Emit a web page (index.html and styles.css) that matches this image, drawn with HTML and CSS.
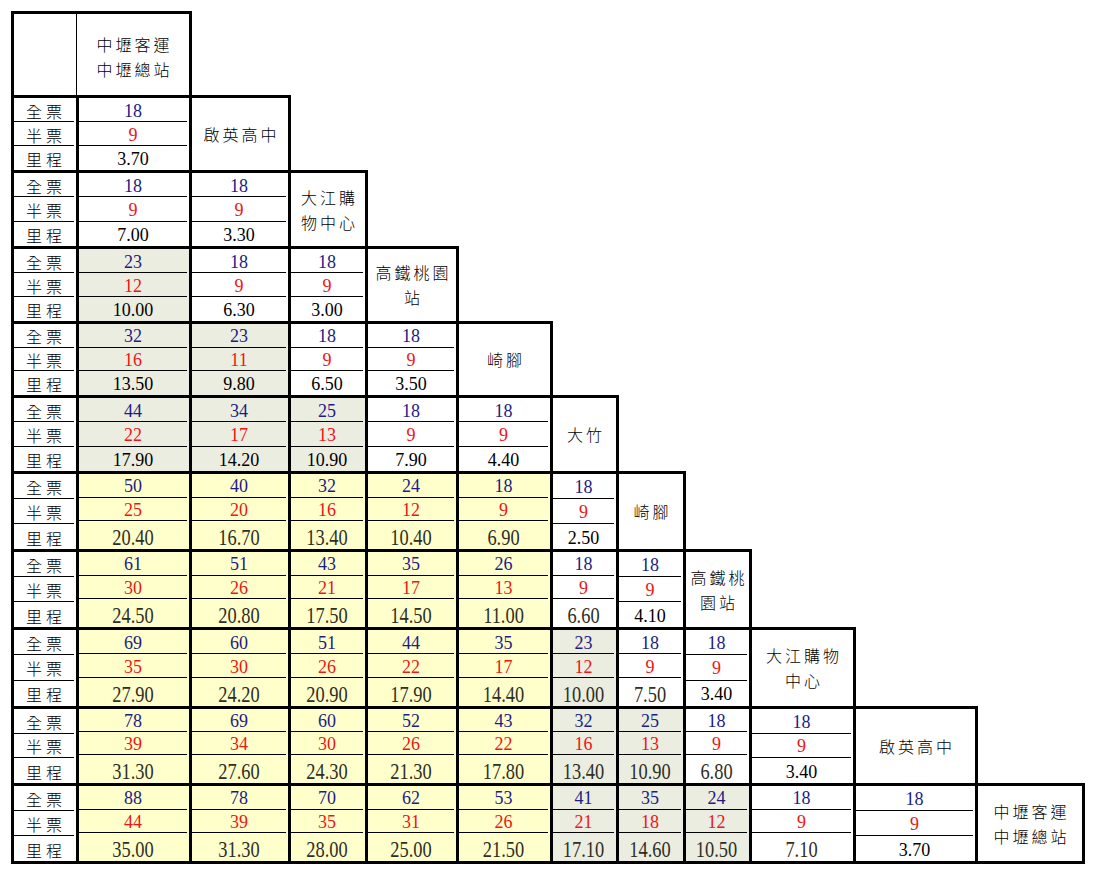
FILE: index.html
```html
<!DOCTYPE html>
<html lang="zh-Hant">
<head>
<meta charset="utf-8">
<title>票價表</title>
<link rel="stylesheet" href="styles.css">
</head>
<body>
<div class="fare">
  <!-- header -->
  <div class="corner"></div>
  <div class="st hd"><p>中壢客運<br>中壢總站</p></div>

  <!-- row 1 -->
  <div class="lab"><span>全票</span><span>半票</span><span>里程</span></div>
  <div class="c"><span class="f">18</span><span class="h">9</span><span class="d">3.70</span></div>
  <div class="st"><p>啟英高中</p></div>

  <!-- row 2 -->
  <div class="lab"><span>全票</span><span>半票</span><span>里程</span></div>
  <div class="c"><span class="f">18</span><span class="h">9</span><span class="d">7.00</span></div>
  <div class="c"><span class="f">18</span><span class="h">9</span><span class="d">3.30</span></div>
  <div class="st"><p>大江購<br>物中心</p></div>

  <!-- row 3 -->
  <div class="lab"><span>全票</span><span>半票</span><span>里程</span></div>
  <div class="c g"><span class="f">23</span><span class="h">12</span><span class="d">10.00</span></div>
  <div class="c"><span class="f">18</span><span class="h">9</span><span class="d">6.30</span></div>
  <div class="c"><span class="f">18</span><span class="h">9</span><span class="d">3.00</span></div>
  <div class="st"><p>高鐵桃園<br>站</p></div>

  <!-- row 4 -->
  <div class="lab"><span>全票</span><span>半票</span><span>里程</span></div>
  <div class="c g"><span class="f">32</span><span class="h">16</span><span class="d">13.50</span></div>
  <div class="c g"><span class="f">23</span><span class="h">11</span><span class="d">9.80</span></div>
  <div class="c"><span class="f">18</span><span class="h">9</span><span class="d">6.50</span></div>
  <div class="c"><span class="f">18</span><span class="h">9</span><span class="d">3.50</span></div>
  <div class="st"><p>崎腳</p></div>

  <!-- row 5 -->
  <div class="lab"><span>全票</span><span>半票</span><span>里程</span></div>
  <div class="c g"><span class="f">44</span><span class="h">22</span><span class="d">17.90</span></div>
  <div class="c g"><span class="f">34</span><span class="h">17</span><span class="d">14.20</span></div>
  <div class="c g"><span class="f">25</span><span class="h">13</span><span class="d">10.90</span></div>
  <div class="c"><span class="f">18</span><span class="h">9</span><span class="d">7.90</span></div>
  <div class="c"><span class="f">18</span><span class="h">9</span><span class="d">4.40</span></div>
  <div class="st"><p>大竹</p></div>

  <!-- row 6 -->
  <div class="lab"><span>全票</span><span>半票</span><span>里程</span></div>
  <div class="c y"><span class="f">50</span><span class="h">25</span><span class="d cn">20.40</span></div>
  <div class="c y"><span class="f">40</span><span class="h">20</span><span class="d cn">16.70</span></div>
  <div class="c y"><span class="f">32</span><span class="h">16</span><span class="d cn">13.40</span></div>
  <div class="c y"><span class="f">24</span><span class="h">12</span><span class="d cn">10.40</span></div>
  <div class="c y"><span class="f">18</span><span class="h">9</span><span class="d cn">6.90</span></div>
  <div class="c"><span class="f">18</span><span class="h">9</span><span class="d">2.50</span></div>
  <div class="st"><p>崎腳</p></div>

  <!-- row 7 -->
  <div class="lab"><span>全票</span><span>半票</span><span>里程</span></div>
  <div class="c y"><span class="f">61</span><span class="h">30</span><span class="d cn">24.50</span></div>
  <div class="c y"><span class="f">51</span><span class="h">26</span><span class="d cn">20.80</span></div>
  <div class="c y"><span class="f">43</span><span class="h">21</span><span class="d cn">17.50</span></div>
  <div class="c y"><span class="f">35</span><span class="h">17</span><span class="d cn">14.50</span></div>
  <div class="c y"><span class="f">26</span><span class="h">13</span><span class="d cn">11.00</span></div>
  <div class="c"><span class="f">18</span><span class="h">9</span><span class="d cn">6.60</span></div>
  <div class="c"><span class="f">18</span><span class="h">9</span><span class="d">4.10</span></div>
  <div class="st"><p>高鐵桃<br>園站</p></div>

  <!-- row 8 -->
  <div class="lab"><span>全票</span><span>半票</span><span>里程</span></div>
  <div class="c y"><span class="f">69</span><span class="h">35</span><span class="d cn">27.90</span></div>
  <div class="c y"><span class="f">60</span><span class="h">30</span><span class="d cn">24.20</span></div>
  <div class="c y"><span class="f">51</span><span class="h">26</span><span class="d cn">20.90</span></div>
  <div class="c y"><span class="f">44</span><span class="h">22</span><span class="d cn">17.90</span></div>
  <div class="c y"><span class="f">35</span><span class="h">17</span><span class="d cn">14.40</span></div>
  <div class="c g"><span class="f">23</span><span class="h">12</span><span class="d cn">10.00</span></div>
  <div class="c"><span class="f">18</span><span class="h">9</span><span class="d cn">7.50</span></div>
  <div class="c"><span class="f">18</span><span class="h">9</span><span class="d">3.40</span></div>
  <div class="st"><p>大江購物<br>中心</p></div>

  <!-- row 9 -->
  <div class="lab"><span>全票</span><span>半票</span><span>里程</span></div>
  <div class="c y"><span class="f">78</span><span class="h">39</span><span class="d cn">31.30</span></div>
  <div class="c y"><span class="f">69</span><span class="h">34</span><span class="d cn">27.60</span></div>
  <div class="c y"><span class="f">60</span><span class="h">30</span><span class="d cn">24.30</span></div>
  <div class="c y"><span class="f">52</span><span class="h">26</span><span class="d cn">21.30</span></div>
  <div class="c y"><span class="f">43</span><span class="h">22</span><span class="d cn">17.80</span></div>
  <div class="c g"><span class="f">32</span><span class="h">16</span><span class="d cn">13.40</span></div>
  <div class="c g"><span class="f">25</span><span class="h">13</span><span class="d cn">10.90</span></div>
  <div class="c"><span class="f">18</span><span class="h">9</span><span class="d cn">6.80</span></div>
  <div class="c"><span class="f">18</span><span class="h">9</span><span class="d">3.40</span></div>
  <div class="st"><p>啟英高中</p></div>

  <!-- row 10 -->
  <div class="lab last"><span>全票</span><span>半票</span><span>里程</span></div>
  <div class="c y last"><span class="f">88</span><span class="h">44</span><span class="d cn">35.00</span></div>
  <div class="c y last"><span class="f">78</span><span class="h">39</span><span class="d cn">31.30</span></div>
  <div class="c y last"><span class="f">70</span><span class="h">35</span><span class="d cn">28.00</span></div>
  <div class="c y last"><span class="f">62</span><span class="h">31</span><span class="d cn">25.00</span></div>
  <div class="c y last"><span class="f">53</span><span class="h">26</span><span class="d cn">21.50</span></div>
  <div class="c g last"><span class="f">41</span><span class="h">21</span><span class="d cn">17.10</span></div>
  <div class="c g last"><span class="f">35</span><span class="h">18</span><span class="d cn">14.60</span></div>
  <div class="c g last"><span class="f">24</span><span class="h">12</span><span class="d cn">10.50</span></div>
  <div class="c last"><span class="f">18</span><span class="h">9</span><span class="d cn">7.10</span></div>
  <div class="c last"><span class="f">18</span><span class="h">9</span><span class="d">3.70</span></div>
  <div class="st last"><p>中壢客運<br>中壢總站</p></div>
</div>
</body>
</html>
```

FILE: styles.css
```css
* { box-sizing: border-box; }

html, body {
  margin: 0;
  background: #ffffff;
}

body {
  padding: 11px 0 8px 11px;
  font-family: "Liberation Serif", "Noto Sans CJK TC", serif;
  color: #000;
}

.fare {
  display: grid;
  grid-template-columns: 65px 113px 99px 77px 91px 94px 66px 67px 66px 104px 122px 107px;
  grid-template-rows: 84px 75px 76px 75px 74px 76px 78px 78px 79px 77px 81px;
  width: 1077px;
}

.corner,
.lab,
.c,
.st {
  border-left: 3px solid #000;
  border-top: 3px solid #000;
}

.corner,
.lab {
  grid-column: 1;
}

.st {
  border-right: 3px solid #000;
  margin-right: -3px;
  display: flex;
  align-items: center;
  justify-content: center;
  background: #fff;
}

.st.hd {
  border-left: 1px solid #000;
  align-items: flex-start;
  padding-top: 18px;
}

.st p {
  margin: 0;
  font-family: "Noto Sans CJK TC", sans-serif;
  font-weight: 300;
  font-size: 16px;
  line-height: 25px;
  letter-spacing: 3px;
  padding-left: 3px;
  text-align: center;
  color: #000;
}

.last {
  border-bottom: 3px solid #000;
}

.lab,
.c {
  display: grid;
  grid-template-rows: 1fr 1fr 1fr;
  padding-right: 2px;
  background: #fff;
}

.lab span,
.c span {
  display: flex;
  align-items: center;
  justify-content: center;
  padding-top: 2px;
  line-height: 1;
  white-space: nowrap;
}

.lab span:nth-child(1),
.lab span:nth-child(2),
.c span:nth-child(1),
.c span:nth-child(2) {
  border-bottom: 1px solid #000;
}

.lab span {
  font-family: "Noto Sans CJK TC", sans-serif;
  font-weight: 300;
  font-size: 16px;
  letter-spacing: 4px;
  padding-left: 4px;
  color: #000;
}

.c span {
  font-size: 18px;
}

.c .f { color: #1c1c84; }
.c .h { color: #ee1515; }
.c .d { color: #000; }

.c .cn {
  font-size: 23px;
  color: #2e2e24;
  transform: scaleX(0.8);
  padding-top: 5px;
}

.g { background: #ebede0; }
.y { background: #ffffcc; }
```
